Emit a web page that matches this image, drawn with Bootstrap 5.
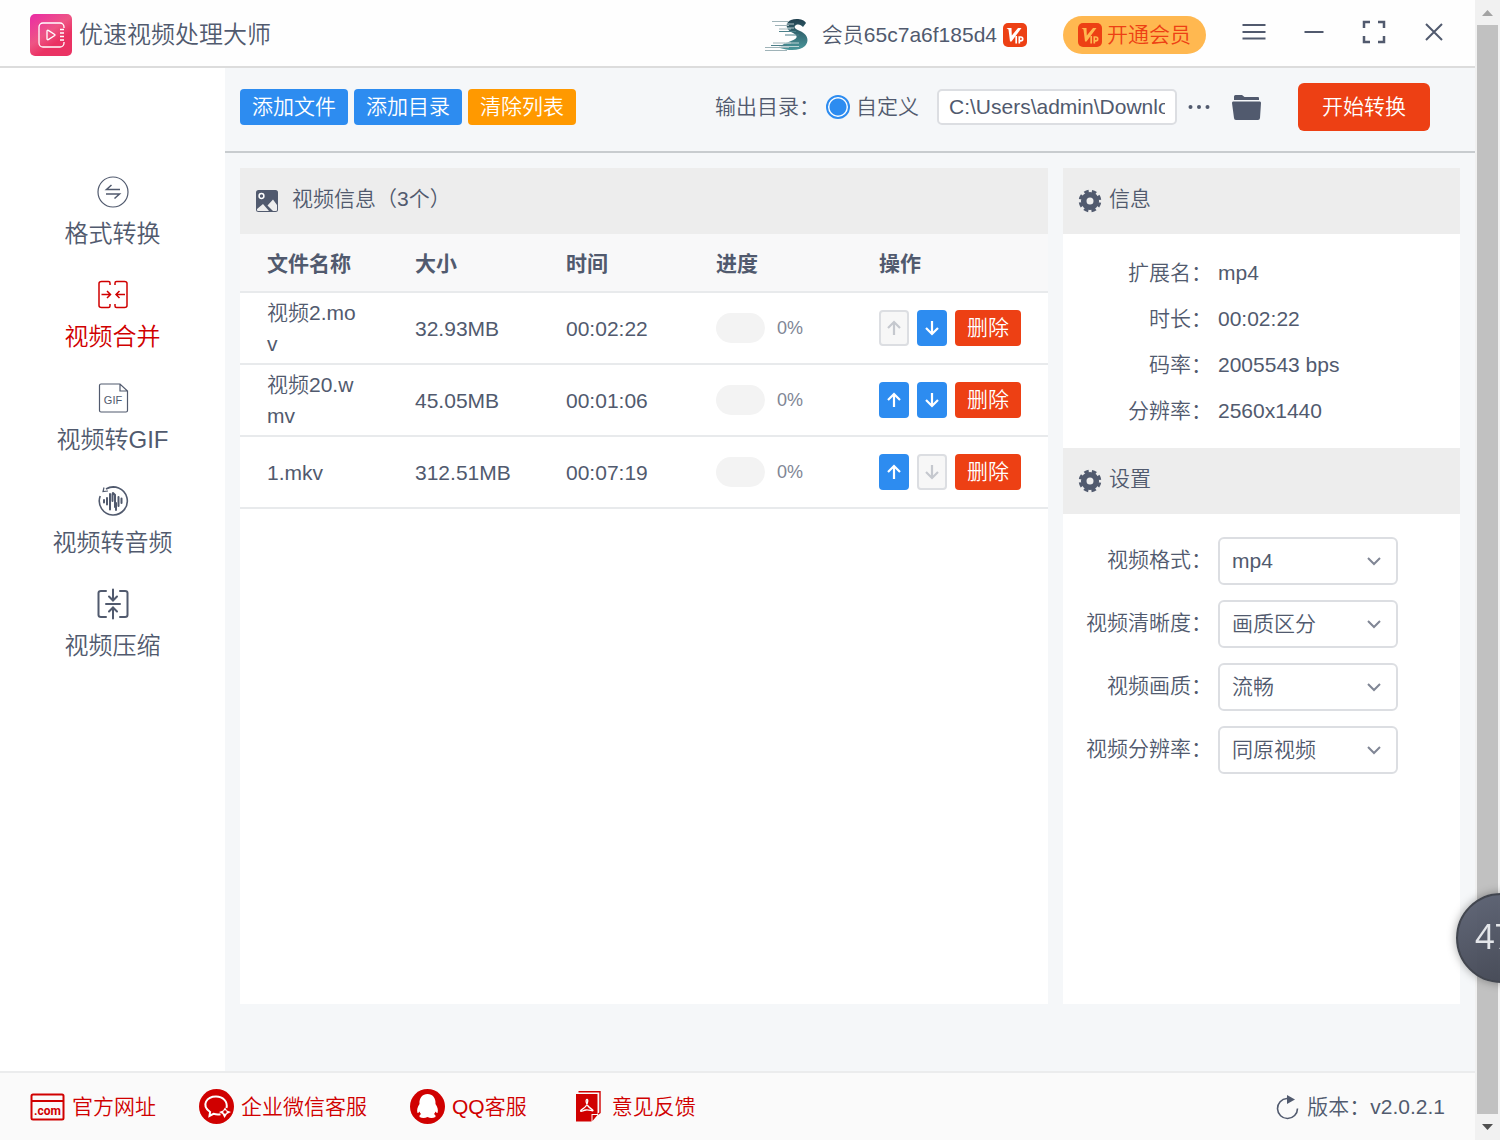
<!DOCTYPE html>
<html lang="zh-CN">
<head>
<meta charset="utf-8">
<meta name="viewport" content="width=device-width, initial-scale=1">
<title>优速视频处理大师</title>
<link href="https://cdn.jsdelivr.net/npm/bootstrap@5.3.0/dist/css/bootstrap.min.css" rel="stylesheet">
<style>
:root{--ink:#515a6e;--blue:#2d8cf0;--red:#ed4014;--crimson:#d00000;--line:#dcdee2}
body{font-family:"Liberation Sans","Noto Sans CJK SC",sans-serif;font-size:21px;line-height:32px;font-weight:350;color:var(--ink);background:#fff}
svg{display:block;flex:none}
a{color:inherit;text-decoration:none}
.app-head{height:68px;border-bottom:2px solid #dcdcdc;padding:4px 11px 0 30px;background:#fefefe}
.app-title{font-size:24px;line-height:36px;font-weight:350;margin-left:7px}
.avatar{margin-right:14px}
.vip-mark{margin-left:6px;margin-right:36px}
.btn{--bs-btn-font-size:21px;--bs-btn-line-height:32px;--bs-btn-font-weight:350}
.btn-vip{background:#ffb850;color:var(--red);border:0;border-radius:19px;height:38px;padding:0 15px;gap:5px;margin-right:18px}
.win-set{padding-bottom:6px}
.btn-win{width:60px;height:40px;padding:0;border:0;color:var(--ink)}
.side{width:225px;flex:none;padding-top:108px;gap:27px;background:#fff}
.side a{gap:8px;font-size:24px;line-height:36px}
.side a.active,.foot-link{color:var(--crimson)}
.work{background:#f5f7f9}
.tools{height:85px;border-bottom:2px solid #c8cccf;padding:0 45px 5px 15px}
.btn-tool{height:36px;padding:0 12px;border:0;border-radius:4px;color:#fff}
.bg-blue{background:var(--blue)}.bg-amber{background:#f90}.bg-red{background:var(--red)}
.btn-start{height:48px;padding:0 24px;border:0;border-radius:6px;color:#fff;margin-left:36px}
.out-radio{appearance:none;width:24px;height:24px;margin:0 6px 0 6px;border:2px solid var(--blue);border-radius:50%;background:radial-gradient(circle,var(--blue) 8px,#fff 9px)}
.out-path{width:240px;height:36px;margin-left:18px;padding:0 10px;border:2px solid var(--line);border-radius:5px;background:#fff;color:var(--ink);font-weight:350}
.panels{padding:15px 15px 67px;gap:15px}
.pane{background:#fff}
.pane-side{width:397px;flex:none}
.pane-head{height:66px;background:#ededed;padding:0 15px;font-size:21px;line-height:32px;font-weight:350;margin:0}
.pane-head span{padding-bottom:4px}
.files{table-layout:fixed;margin:0;--bs-table-color:var(--ink);--bs-table-bg:transparent;border-color:#e8eaec}
.files th{height:58px;padding:3px 27px 0;background:#f8f8f9;border-bottom:2px solid #e8eaec;vertical-align:middle;font-weight:700}
.files td{height:72px;padding:0 27px;line-height:31px;border-bottom:2px solid #e8eaec;vertical-align:middle;word-break:break-all;color:var(--ink)}
.files th:last-child,.files td:last-child{padding-right:0}
.bar-track{width:49px;height:30px;border-radius:15px;background:#f3f3f3}
.pct{font-size:18px;color:#808695;margin-left:12px}
.btn-move{width:30px;height:36px;padding:0;border:0;border-radius:4px;background:var(--blue);color:#fff}
.btn-move:disabled{background:#f7f7f7;color:#c5c8ce;border:2px solid var(--line);opacity:1}
.info{margin:0;padding:16px 0;height:214px}
.info div{height:46px}
.lab{width:149px;flex:none;text-align:right;font-weight:350;margin-right:6px}
.opts{padding-top:23px;gap:15px}
.opts .lab{padding-bottom:3px}
.opt-select{width:180px;height:48px;padding:0 36px 0 12px;border:2px solid var(--line);border-radius:6px;color:var(--ink);font-size:21px;font-weight:350;background-color:#fff;background-position:right 14px center;background-size:16px 16px;background-image:url("data:image/svg+xml,%3csvg xmlns='http://www.w3.org/2000/svg' viewBox='0 0 16 16'%3e%3cpath fill='none' stroke='%23808695' stroke-width='2' d='M2 5l6 6 6-6'/%3e%3c/svg%3e")}
.app-foot{height:69px;border-top:2px solid #ebeced;background:#fafafa;padding:0 30px;gap:43px}
.foot-link{gap:7px}
.rail{width:25px;flex:none;background:#f1f1f1;padding:0 2px}
.rail-thumb{background:#c1c1c1}
.ball{position:fixed;right:-46px;bottom:157px;width:90px;height:90px;padding-left:17px;border-radius:50%;background:linear-gradient(160deg,rgba(95,101,118,.98),rgba(66,70,82,.98));border:2px solid #42464f;box-shadow:0 0 10px rgba(0,0,0,.35);color:#e4e6ea;font:400 34px/82px "Open Sans",sans-serif}
</style>
<script src="https://cdn.jsdelivr.net/npm/bootstrap@5.3.0/dist/js/bootstrap.bundle.min.js"></script>
</head>
<body>
<svg width="0" height="0" class="position-absolute" aria-hidden="true">
<symbol id="up" viewBox="0 0 16 16"><path d="M8 15V2M2 8l6-6 6 6" fill="none" stroke="currentColor" stroke-width="2.2"/></symbol>
<symbol id="down" viewBox="0 0 16 16"><path d="M8 1v13M2 8l6 6 6-6" fill="none" stroke="currentColor" stroke-width="2.2"/></symbol>
<symbol id="vip" viewBox="0 0 24 24"><rect width="24" height="24" rx="5" fill="#ed4014"/><path d="M3.500 5h5l.3 7.500L15 5h3.500L8.500 18.500H7L5.500 6.500z" fill="currentColor"/><path d="M13.200 13v7.500M16.300 20.500V14h1.500a1.900 1.900 0 0 1 0 3.800h-1.500" fill="none" stroke="currentColor" stroke-width="1.700"/></symbol>
<symbol id="gear" viewBox="0 0 24 24"><circle cx="12" cy="12" r="6.300" fill="none" stroke="currentColor" stroke-width="5.600"/><circle cx="12" cy="12" r="9.800" fill="none" stroke="currentColor" stroke-width="3" stroke-dasharray="4.500 3.197" stroke-dashoffset="-1.600"/></symbol>
</svg>
<div class="d-flex min-vh-100">
<div class="d-flex flex-column flex-grow-1" style="min-width:0">
<header class="app-head d-flex align-items-center">
<svg width="42" height="42" viewBox="0 0 42 42"><defs><linearGradient id="lg" x1="0" y1="0" x2=".7" y2="1"><stop stop-color="#ea2ba6"/><stop offset=".5" stop-color="#ee5585"/><stop offset=".75" stop-color="#ea3263"/></linearGradient></defs><rect width="42" height="42" rx="5" fill="url(#lg)"/><g fill="none" stroke="#fff" stroke-width="1.3"><path d="M34 14v-1a4 4 0 0 0-4-4H13a4 4 0 0 0-4 4v16a4 4 0 0 0 4 4h17a4 4 0 0 0 4-4v-1M30 15.500h4M30 19h4M30 22.500h4M30 26h4"/><path d="M17 17v8a.8.8 0 0 0 1.300.6l6.400-4a.8.8 0 0 0 0-1.200l-6.400-4a.8.8 0 0 0-1.300.6z"/></g></svg>
<h1 class="app-title mb-0 me-auto">优速视频处理大师</h1>
<svg class="avatar" width="43" height="36" viewBox="0 0 43 36"><defs><linearGradient id="sg" x2="0" y2="1"><stop stop-color="#21404f"/><stop offset="1" stop-color="#4a989c"/></linearGradient></defs><path d="M38 10l3-4c-2-4-10-5-15-3-7 3-5 10 2 13 6 3 4 6-2 8-5 2-9 3-11 7 9 3 20 3 25-2 5-6 2-12-5-15-5-2-7-4-4-6 3-1 5 0 7 2z" fill="url(#sg)"/><path d="M7 4.500h16M10 8.500h14M14 12h12M8 26h18M0 30.500h24M0 33.500h22" stroke="#9fb3b8" stroke-width="1.200"/><path d="M14 14.500h17M20 18h14M6 28.500h16" stroke="#4c7f89" stroke-width="1"/><path d="M21 7h8M20 11h9M20 26h14M14 29.500h20" stroke="#dce7e8" stroke-width=".8"/></svg>
<span>会员65c7a6f185d4</span>
<svg class="vip-mark text-white" width="24" height="24"><use href="#vip"/></svg>
<button type="button" class="btn btn-vip d-flex align-items-center"><svg width="24" height="24" color="#ffb850"><use href="#vip"/></svg>开通会员</button>
<div class="win-set d-flex">
<button type="button" class="btn btn-win d-flex align-items-center justify-content-center" aria-label="菜单"><svg width="24" height="24" viewBox="0 0 24 24" stroke="currentColor" stroke-width="2"><path d="M.500 5h23M.500 12h23M.500 18.500h23"/></svg></button>
<button type="button" class="btn btn-win d-flex align-items-center justify-content-center" aria-label="最小化"><svg width="24" height="24" viewBox="0 0 24 24" stroke="currentColor" stroke-width="2"><path d="M2.500 12h19"/></svg></button>
<button type="button" class="btn btn-win d-flex align-items-center justify-content-center" aria-label="全屏"><svg width="24" height="24" viewBox="0 0 24 24" fill="none" stroke="currentColor" stroke-width="2.500"><path d="M2 8V2h6M16 2h6v6M22 16v6h-6M8 22H2v-6"/></svg></button>
<button type="button" class="btn btn-win d-flex align-items-center justify-content-center" aria-label="关闭"><svg width="24" height="24" viewBox="0 0 24 24" stroke="currentColor" stroke-width="2"><path d="M4 4l16 16M20 4L4 20"/></svg></button>
</div>
</header>
<div class="d-flex flex-grow-1">
<nav class="side d-flex flex-column" aria-label="功能">
<a href="#" class="d-flex flex-column align-items-center"><svg width="32" height="32" viewBox="0 0 32 32" fill="none" stroke="currentColor" stroke-width="1.200"><circle cx="16" cy="16" r="15"/><path stroke-width="1.500" d="M23 13.500H9.500l5-4.500M9 18h13.500l-5 4.500"/></svg>格式转换</a>
<a href="#" class="d-flex flex-column align-items-center active"><svg width="32" height="32" viewBox="0 0 32 32" fill="none" stroke="currentColor" stroke-width="1.500"><path d="M13 6V4q0-1.500-1.500-1.500h-7q-2.500 0-2.500 2v22q0 2 2.500 2h7q1.500 0 1.500-1.500v-2M18 6V4q0-1.500 1.500-1.500h8q2.500 0 2.500 2v22q0 2-2.500 2h-8q-1.500 0-1.500-1.500v-2M4.500 15.500h9M10 12l3.500 3.500L10 19M28 15.500h-9M22.500 12L19 15.500l3.500 3.500"/></svg>视频合并</a>
<a href="#" class="d-flex flex-column align-items-center"><svg width="32" height="32" viewBox="0 0 32 32" fill="none" stroke="currentColor" stroke-width="1.200"><path d="M23 2H4q-1.500 0-1.500 1.500v25Q2.500 30 4 30h25q1.500 0 1.500-1.500V9zM23 2v7h7.500"/><text x="16" y="22" text-anchor="middle" font-size="11" fill="currentColor" stroke="none">GIF</text></svg>视频转GIF</a>
<a href="#" class="d-flex flex-column align-items-center"><svg width="32" height="32" viewBox="0 0 32 32" fill="none" stroke="currentColor" stroke-width="1.600"><path d="M3.200 11A14 14 0 1 0 9 4M9 4q4-2 8-2"/><path d="M7 2.500l-1 4 5-.5" stroke-width="1.200"/><path stroke-width="2" stroke-linecap="round" d="M7 15v2.500M10 13v6.500M13 9v15.500M15.500 9v7M16 8l2 2v12M19 18v7M21.500 12v9M24.500 13.500v4.500"/></svg>视频转音频</a>
<a href="#" class="d-flex flex-column align-items-center"><svg width="32" height="32" viewBox="0 0 32 32" fill="none" stroke="currentColor" stroke-width="2" stroke-linecap="round"><path d="M9 3H4Q1.500 3 1.500 5v22q0 2 2.500 2h5M23 3h5q2.500 0 2.500 2v22q0 2-2.500 2h-5M9 16h14M16 1.500V12M12 8.500l4 4 4-4M16 30.500V20M12 23.500l4-4 4 4"/></svg>视频压缩</a>
</nav>
<main class="work d-flex flex-column flex-grow-1" style="min-width:0">
<div class="tools d-flex align-items-center">
<div class="d-flex me-auto" style="gap:6px">
<button type="button" class="btn btn-tool bg-blue">添加文件</button><button type="button" class="btn btn-tool bg-blue">添加目录</button><button type="button" class="btn btn-tool bg-amber">清除列表</button>
</div>
<span>输出目录：</span>
<input class="out-radio" type="radio" name="out" id="custom" checked><label for="custom">自定义</label>
<input class="out-path" type="text" aria-label="输出目录路径" value="C:\Users\admin\Downloads">
<button type="button" class="btn border-0 p-0 ms-2" aria-label="浏览"><svg width="30" height="24" viewBox="0 0 30 24" fill="currentColor" color="#515a6e"><circle cx="5.500" cy="12" r="2"/><circle cx="14" cy="12" r="2"/><circle cx="22.500" cy="12" r="2"/></svg></button>
<button type="button" class="btn border-0 p-0" style="margin-left:16px" aria-label="打开目录"><svg width="31" height="28" viewBox="0 0 31 28" fill="#515a6e"><path d="M3 7V3.500Q3 2 4.500 2H11l2.500 2H27q1 0 1 1v2z"/><path d="M2 8.500h27q1 0 1 1.500l-1 15q-.2 2-2 2H5q-2 0-2-2L1 10q0-1.500 1-1.500z"/></svg></button>
<button type="button" class="btn btn-start bg-red">开始转换</button>
</div>
<div class="panels d-flex flex-grow-1">
<section class="pane flex-grow-1">
<h2 class="pane-head d-flex align-items-center"><svg width="24" height="24" viewBox="0 0 24 24"><rect x="1" y="1" width="22" height="22" rx="2.500" fill="#515a6e"/><circle cx="6.500" cy="7" r="2.400" fill="none" stroke="#fff" stroke-width="1.500"/><path d="M2 20l6-5 6 7H3q-1 0-1-1zM12.500 16.500l5.500-6 4 5.500V21q0 1-1 1h-3z" fill="#ededed"/></svg><span style="margin-left:13px">视频信息（3个）</span></h2>
<table class="table files">
<colgroup><col style="width:18.32%"><col style="width:18.69%"><col style="width:18.56%"><col style="width:20.17%"><col></colgroup>
<thead><tr><th scope="col">文件名称</th><th scope="col">大小</th><th scope="col">时间</th><th scope="col">进度</th><th scope="col">操作</th></tr></thead>
<tbody>
<tr><td>视频2.mov</td><td>32.93MB</td><td>00:02:22</td><td><div class="d-flex align-items-center"><div class="bar-track"></div><span class="pct">0%</span></div></td><td><div class="d-flex" style="gap:8px"><button type="button" class="btn btn-move d-flex align-items-center justify-content-center" disabled aria-label="上移"><svg width="16" height="16"><use href="#up"/></svg></button><button type="button" class="btn btn-move d-flex align-items-center justify-content-center" aria-label="下移"><svg width="16" height="16"><use href="#down"/></svg></button><button type="button" class="btn btn-tool bg-red">删除</button></div></td></tr>
<tr><td>视频20.wmv</td><td>45.05MB</td><td>00:01:06</td><td><div class="d-flex align-items-center"><div class="bar-track"></div><span class="pct">0%</span></div></td><td><div class="d-flex" style="gap:8px"><button type="button" class="btn btn-move d-flex align-items-center justify-content-center" aria-label="上移"><svg width="16" height="16"><use href="#up"/></svg></button><button type="button" class="btn btn-move d-flex align-items-center justify-content-center" aria-label="下移"><svg width="16" height="16"><use href="#down"/></svg></button><button type="button" class="btn btn-tool bg-red">删除</button></div></td></tr>
<tr><td>1.mkv</td><td>312.51MB</td><td>00:07:19</td><td><div class="d-flex align-items-center"><div class="bar-track"></div><span class="pct">0%</span></div></td><td><div class="d-flex" style="gap:8px"><button type="button" class="btn btn-move d-flex align-items-center justify-content-center" aria-label="上移"><svg width="16" height="16"><use href="#up"/></svg></button><button type="button" class="btn btn-move d-flex align-items-center justify-content-center" disabled aria-label="下移"><svg width="16" height="16"><use href="#down"/></svg></button><button type="button" class="btn btn-tool bg-red">删除</button></div></td></tr>
</tbody>
</table>
</section>
<aside class="pane pane-side">
<h2 class="pane-head d-flex align-items-center"><svg width="24" height="24"><use href="#gear"/></svg><span style="margin-left:7px">信息</span></h2>
<dl class="info">
<div class="d-flex align-items-center"><dt class="lab">扩展名：</dt><dd class="mb-0">mp4</dd></div>
<div class="d-flex align-items-center"><dt class="lab">时长：</dt><dd class="mb-0">00:02:22</dd></div>
<div class="d-flex align-items-center"><dt class="lab">码率：</dt><dd class="mb-0">2005543 bps</dd></div>
<div class="d-flex align-items-center"><dt class="lab">分辨率：</dt><dd class="mb-0">2560x1440</dd></div>
</dl>
<h2 class="pane-head d-flex align-items-center"><svg width="24" height="24"><use href="#gear"/></svg><span style="margin-left:7px">设置</span></h2>
<form class="opts d-flex flex-column">
<div class="d-flex align-items-center"><label class="lab" for="fmt">视频格式：</label><select id="fmt" class="form-select opt-select"><option>mp4</option></select></div>
<div class="d-flex align-items-center"><label class="lab" for="clarity">视频清晰度：</label><select id="clarity" class="form-select opt-select"><option>画质区分</option></select></div>
<div class="d-flex align-items-center"><label class="lab" for="quality">视频画质：</label><select id="quality" class="form-select opt-select"><option>流畅</option></select></div>
<div class="d-flex align-items-center"><label class="lab" for="res">视频分辨率：</label><select id="res" class="form-select opt-select"><option>同原视频</option></select></div>
</form>
</aside>
</div>
</main>
</div>
<footer class="app-foot d-flex align-items-center">
<a href="#" class="foot-link d-flex align-items-center"><svg width="35" height="35" viewBox="0 0 35 35"><path d="M3 5.500h29q1.500 0 1.500 1.500v22q0 1.500-1.500 1.500H3q-1.500 0-1.500-1.500V7q0-1.500 1.500-1.500zM1.500 12h32" fill="none" stroke="currentColor" stroke-width="2"/><text x="17.500" y="26" text-anchor="middle" font-size="12" font-weight="700" font-family="Roboto, sans-serif" fill="currentColor">.com</text></svg>官方网址</a>
<a href="#" class="foot-link d-flex align-items-center"><svg width="35" height="35" viewBox="0 0 35 35"><circle cx="17.500" cy="17.500" r="17.500" fill="currentColor"/><path d="M21.500 25.300a13 13 0 0 1-7-.5l-4 2.200.6-4C1.500 16 8 7.500 17 7.500c7 0 12 5 10.500 11.500" fill="none" stroke="#fff" stroke-width="2"/><path d="M26 18.500l2 3 4 1.500-4 2-2.500 4-2-4-3.500-2 4-1.500z" fill="#fff"/><circle cx="26" cy="23" r="1.700" fill="#d00000"/></svg>企业微信客服</a>
<a href="#" class="foot-link d-flex align-items-center"><svg width="35" height="35" viewBox="0 0 35 35"><circle cx="17.500" cy="17.500" r="17.500" fill="currentColor"/><path d="M17.500 5c-5 0-8.500 4-8 10-2 3-3 6-2 9q1 0 2-1.500.5 1.500 1.500 2.500-2 1-1.500 3 4 2 8 0 4 2 8 0 .5-2-1.500-3 1-1 1.500-2.500 1 1.500 2 1.500c1-3 0-6-2-9 .5-6-3-10-8-10z" fill="#fff"/></svg>QQ客服</a>
<a href="#" class="foot-link d-flex align-items-center"><svg width="35" height="35" viewBox="0 0 35 35"><path d="M8.500 2.700h21.500v21l-2 1.500" fill="none" stroke="currentColor" stroke-width="1.400"/><path d="M6 5h21.500v20h-6v7.500H6zM22.500 26h5l-5 6z" fill="currentColor"/><path d="M17 10.500c-1.500 0-1 4 1 6.500s5 3.500 5 4.500-4-1-7-.5-5 2-5.500 1 4-2.500 5.500-5 2.500-6.500 1-6.500z" fill="none" stroke="#fff" stroke-width="1.300"/></svg>意见反馈</a>
<a href="#" class="d-flex align-items-center ms-auto" style="gap:8px"><svg width="24" height="26" viewBox="0 0 24 26"><path d="M12 4.500a10 10 0 1 0 10.500 10" fill="none" stroke="currentColor" stroke-width="1.600"/><path d="M12 1v9l8-4.500z" fill="currentColor"/></svg>版本：v2.0.2.1</a>
</footer>
</div>
<div class="rail d-flex flex-column" aria-hidden="true">
<svg width="21" height="25" viewBox="0 0 21 25"><path d="M5 16l5.500-6 5.500 6z" fill="#a3a3a3"/></svg>
<div class="rail-thumb flex-grow-1"></div>
<svg width="21" height="26" viewBox="0 0 21 26"><path d="M5 10l5.500 6 5.500-6z" fill="#505050"/></svg>
</div>
</div>
<div class="ball">47</div>
</body>
</html>
